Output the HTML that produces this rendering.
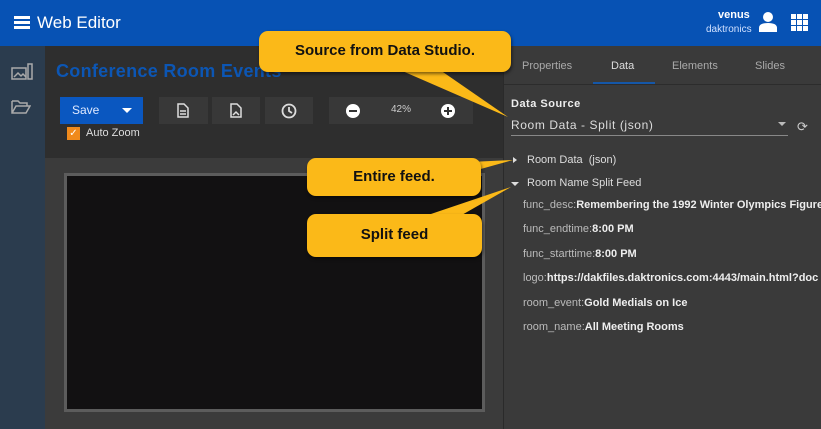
<!DOCTYPE html><html><head><style>
*{margin:0;padding:0;box-sizing:border-box}
body{width:821px;height:429px;overflow:hidden;background:#3a3a3a;font-family:"Liberation Sans",sans-serif;position:relative}
.a{position:absolute}
.hdr{left:0;top:0;width:821px;height:46px;background:#0752b4}
.side{left:0;top:46px;width:45px;height:383px;background:#2b3c4e}
.main{left:45px;top:46px;width:458px;height:383px;background:#3b3b3b}
.tb{left:45px;top:46px;width:458px;height:112px;background:#2e2e2e}
.rp{left:503px;top:46px;width:318px;height:383px;background:#3a3a3a;border-left:1px solid #2a2a2a}
.btn{background:#383838;height:27px;top:97px}
.call{background:#fbb918;border-radius:9px;font-weight:bold;font-size:15px;color:#111;text-align:center;box-shadow:1px 2px 3px rgba(0,0,0,.5)}
.kv{left:523px;font-size:11px;color:#bbb;white-space:nowrap}
.kv b{color:#eee}
</style></head><body>
<div class="a hdr"></div>
<div class="a" style="left:14px;top:16px;width:16px;height:3px;background:#fff;box-shadow:0 5px 0 #fff,0 10px 0 #fff"></div>
<div class="a" style="left:37px;top:13px;color:#fff;font-size:17px">Web Editor</div>
<div class="a" style="left:718px;top:9px;color:#fff;font-size:11px;font-weight:bold">venus</div>
<div class="a" style="left:706px;top:24px;color:#cfe0ff;font-size:10px">daktronics</div>
<svg class="a" style="left:759px;top:12px" width="18" height="20"><circle cx="9" cy="5" r="5" fill="#fff"/><path d="M0 20v-4q0-5 9-5t9 5v4z" fill="#fff"/></svg>
<svg class="a" style="left:791px;top:14px" width="17" height="17" fill="#fff"><rect x="0" y="0" width="5" height="5"/><rect x="6" y="0" width="5" height="5"/><rect x="12" y="0" width="5" height="5"/><rect x="0" y="6" width="5" height="5"/><rect x="6" y="6" width="5" height="5"/><rect x="12" y="6" width="5" height="5"/><rect x="0" y="12" width="5" height="5"/><rect x="6" y="12" width="5" height="5"/><rect x="12" y="12" width="5" height="5"/></svg>
<div class="a side"></div>
<svg class="a" style="left:11px;top:63px" width="22" height="18" fill="none" stroke="#aaa" stroke-width="1.5"><rect x="1" y="5" width="14" height="11"/><path d="M3 14l4-4 3 3 2-2 3 3"/><rect x="17" y="1" width="4" height="15"/></svg>
<svg class="a" style="left:11px;top:99px" width="20" height="15" fill="none" stroke="#aaa" stroke-width="1.5"><path d="M1 2h6l2 2h7v3M1 2v12h14l4-7H5L1 14"/></svg>
<div class="a main"></div>
<div class="a tb"></div>
<div class="a" style="left:56px;top:61px;color:#0c56b4;font-size:18px;font-weight:bold;letter-spacing:.3px">Conference Room Events</div>
<div class="a" style="left:60px;top:97px;width:83px;height:27px;background:#0a57c0;color:#dfe9ff;font-size:12px;padding:6px 0 0 12px">Save<span style="position:absolute;left:62px;top:11px;border:5px solid transparent;border-top:5px solid #fff"></span></div>
<div class="a" style="left:67px;top:127px;width:13px;height:13px;background:#f08a1c;color:#fff;font-size:10px;line-height:13px;text-align:center">✓</div>
<div class="a" style="left:86px;top:127px;color:#ddd;font-size:11px">Auto Zoom</div>
<div class="a btn" style="left:159px;width:49px"></div>
<div class="a btn" style="left:212px;width:48px"></div>
<div class="a btn" style="left:265px;width:48px"></div>
<div class="a btn" style="left:329px;width:144px"></div>
<svg class="a" style="left:177px;top:103px" width="12" height="15" fill="none" stroke="#ddd" stroke-width="1.5"><path d="M1 1h6l4 4v9H1z M3 8h6M3 11h6"/></svg>
<svg class="a" style="left:230px;top:103px" width="12" height="15" fill="none" stroke="#ddd" stroke-width="1.5"><path d="M1 1h6l4 4v9H1z"/><path d="M3 12l3-3 3 3" /></svg>
<svg class="a" style="left:281px;top:103px" width="16" height="16" fill="none" stroke="#ddd" stroke-width="1.8"><circle cx="8" cy="8" r="6.5"/><path d="M8 4v4l3 2"/></svg>
<svg class="a" style="left:346px;top:104px" width="14" height="14"><circle cx="7" cy="7" r="7" fill="#fff"/><rect x="3" y="6" width="8" height="2" fill="#333"/></svg>
<div class="a" style="left:391px;top:104px;color:#ccc;font-size:10px">42%</div>
<svg class="a" style="left:441px;top:104px" width="14" height="14"><circle cx="7" cy="7" r="7" fill="#fff"/><rect x="3" y="6" width="8" height="2" fill="#333"/><rect x="6" y="3" width="2" height="8" fill="#333"/></svg>
<div class="a" style="left:64px;top:173px;width:421px;height:239px;background:#121112;border:3px solid #5c5c5c"></div>
<div class="a rp"></div>
<div class="a" style="left:522px;top:60px;color:#aaa;font-size:11px">Properties</div>
<div class="a" style="left:611px;top:60px;color:#ddd;font-size:11px">Data</div>
<div class="a" style="left:672px;top:60px;color:#aaa;font-size:11px">Elements</div>
<div class="a" style="left:755px;top:60px;color:#aaa;font-size:11px">Slides</div>
<div class="a" style="left:504px;top:84px;width:317px;height:1px;background:#2c2c2c"></div>
<div class="a" style="left:593px;top:82px;width:62px;height:2px;background:#1557a8"></div>
<div class="a" style="left:511px;top:98px;color:#eee;font-size:11px;font-weight:bold;letter-spacing:.5px">Data Source</div>
<div class="a" style="left:511px;top:118px;color:#ddd;font-size:12px;letter-spacing:.6px">Room Data - Split (json)</div>
<div class="a" style="left:778px;top:122px;border:4px solid transparent;border-top:4px solid #bbb"></div>
<div class="a" style="left:511px;top:135px;width:277px;height:1px;background:#888"></div>
<div class="a" style="left:797px;top:119px;color:#ccc;font-size:13px">⟳</div>
<div class="a" style="left:513px;top:157px;border:3.5px solid transparent;border-left:4px solid #ddd"></div>
<div class="a" style="left:527px;top:154px;color:#ddd;font-size:11px">Room Data&nbsp; (json)</div>
<div class="a" style="left:511px;top:182px;border:4px solid transparent;border-top:4px solid #ddd"></div>
<div class="a" style="left:527px;top:177px;color:#ddd;font-size:11px">Room Name Split Feed</div>
<div class="a kv" style="top:199px">func_desc:<b>Remembering the 1992 Winter Olympics Figure</b></div>
<div class="a kv" style="top:223px">func_endtime:<b>8:00 PM</b></div>
<div class="a kv" style="top:248px">func_starttime:<b>8:00 PM</b></div>
<div class="a kv" style="top:272px">logo:<b>https://dakfiles.daktronics.com:4443/main.html?doc</b></div>
<div class="a kv" style="top:297px">room_event:<b>Gold Medials on Ice</b></div>
<div class="a kv" style="top:321px">room_name:<b>All Meeting Rooms</b></div>
<svg class="a" style="left:0;top:0" width="821" height="429"><polygon points="400,70 440,70 508,117" fill="#fbb918"/><polygon points="470,162 470,172 513,160" fill="#fbb918"/><polygon points="425,216 460,216 511,187" fill="#fbb918"/></svg>
<div class="a call" style="left:259px;top:31px;width:252px;height:41px;line-height:39px">Source from Data Studio.</div>
<div class="a call" style="left:307px;top:158px;width:174px;height:38px;line-height:37px">Entire feed.</div>
<div class="a call" style="left:307px;top:214px;width:175px;height:43px;line-height:42px">Split feed</div>
</body></html>
